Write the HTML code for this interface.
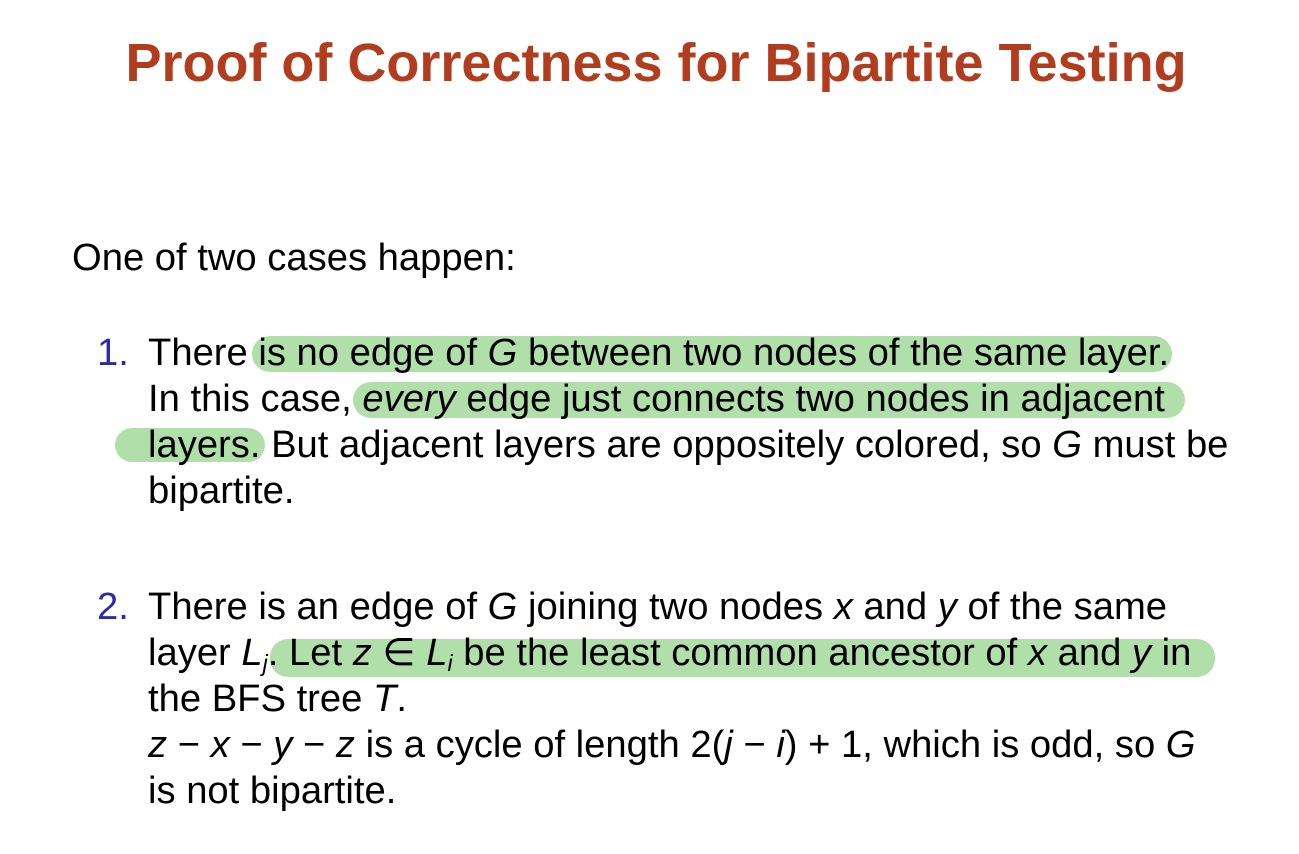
<!DOCTYPE html>
<html><head><meta charset="utf-8"><style>
body{margin:0;width:1299px;height:854px;background:#fff;position:relative;overflow:hidden;font-family:"Liberation Sans",Arial,sans-serif;}
.t{position:absolute;left:0;width:1312px;text-align:center;top:32px;font-size:54px;font-weight:bold;color:#b23c1e;white-space:nowrap}
.l{position:absolute;font-size:38.2px;color:#000;white-space:nowrap;line-height:1}
.n{position:absolute;font-size:38.2px;color:#2a2ab0;line-height:1}
.h{position:absolute;background:#b0dfaa;border-radius:18px}
i{font-style:italic}
sub{font-size:23px;vertical-align:-6px;line-height:0}
</style></head><body>
<div class="t">Proof of Correctness for Bipartite Testing</div>
<div class="h" style="left:252px;top:336px;width:920px;height:36px"></div>
<div class="h" style="left:353px;top:382px;width:832px;height:36px"></div>
<div class="h" style="left:115px;top:428px;width:150px;height:34px"></div>
<div class="h" style="left:270px;top:639px;width:945px;height:38px"></div>
<div class="l" style="left:72px;top:239px">One of two cases happen:</div>
<div class="n" style="left:97px;top:334px">1.</div>
<div class="l" style="left:148px;top:334px">There is no edge of <i>G</i> between two nodes of the same layer.</div>
<div class="l" style="left:148px;top:380px">In this case, <i>every</i> edge just connects two nodes in adjacent</div>
<div class="l" style="left:148px;top:426px">layers. But adjacent layers are oppositely colored, so <i>G</i> must be</div>
<div class="l" style="left:148px;top:472px">bipartite.</div>
<div class="n" style="left:97px;top:588px">2.</div>
<div class="l" style="left:148px;top:588px">There is an edge of <i>G</i> joining two nodes <i>x</i> and <i>y</i> of the same</div>
<div class="l" style="left:148px;top:634px">layer <i>L<sub>j</sub></i>. Let <i>z</i> ∈ <i>L<sub>i</sub></i> be the least common ancestor of <i>x</i> and <i>y</i> in</div>
<div class="l" style="left:148px;top:680px">the BFS tree <i>T</i>.</div>
<div class="l" style="left:148px;top:726px"><i>z</i> − <i>x</i> − <i>y</i> − <i>z</i> is a cycle of length 2(<i>j</i> − <i>i</i>) + 1, which is odd, so <i>G</i></div>
<div class="l" style="left:148px;top:772px">is not bipartite.</div>
</body></html>
